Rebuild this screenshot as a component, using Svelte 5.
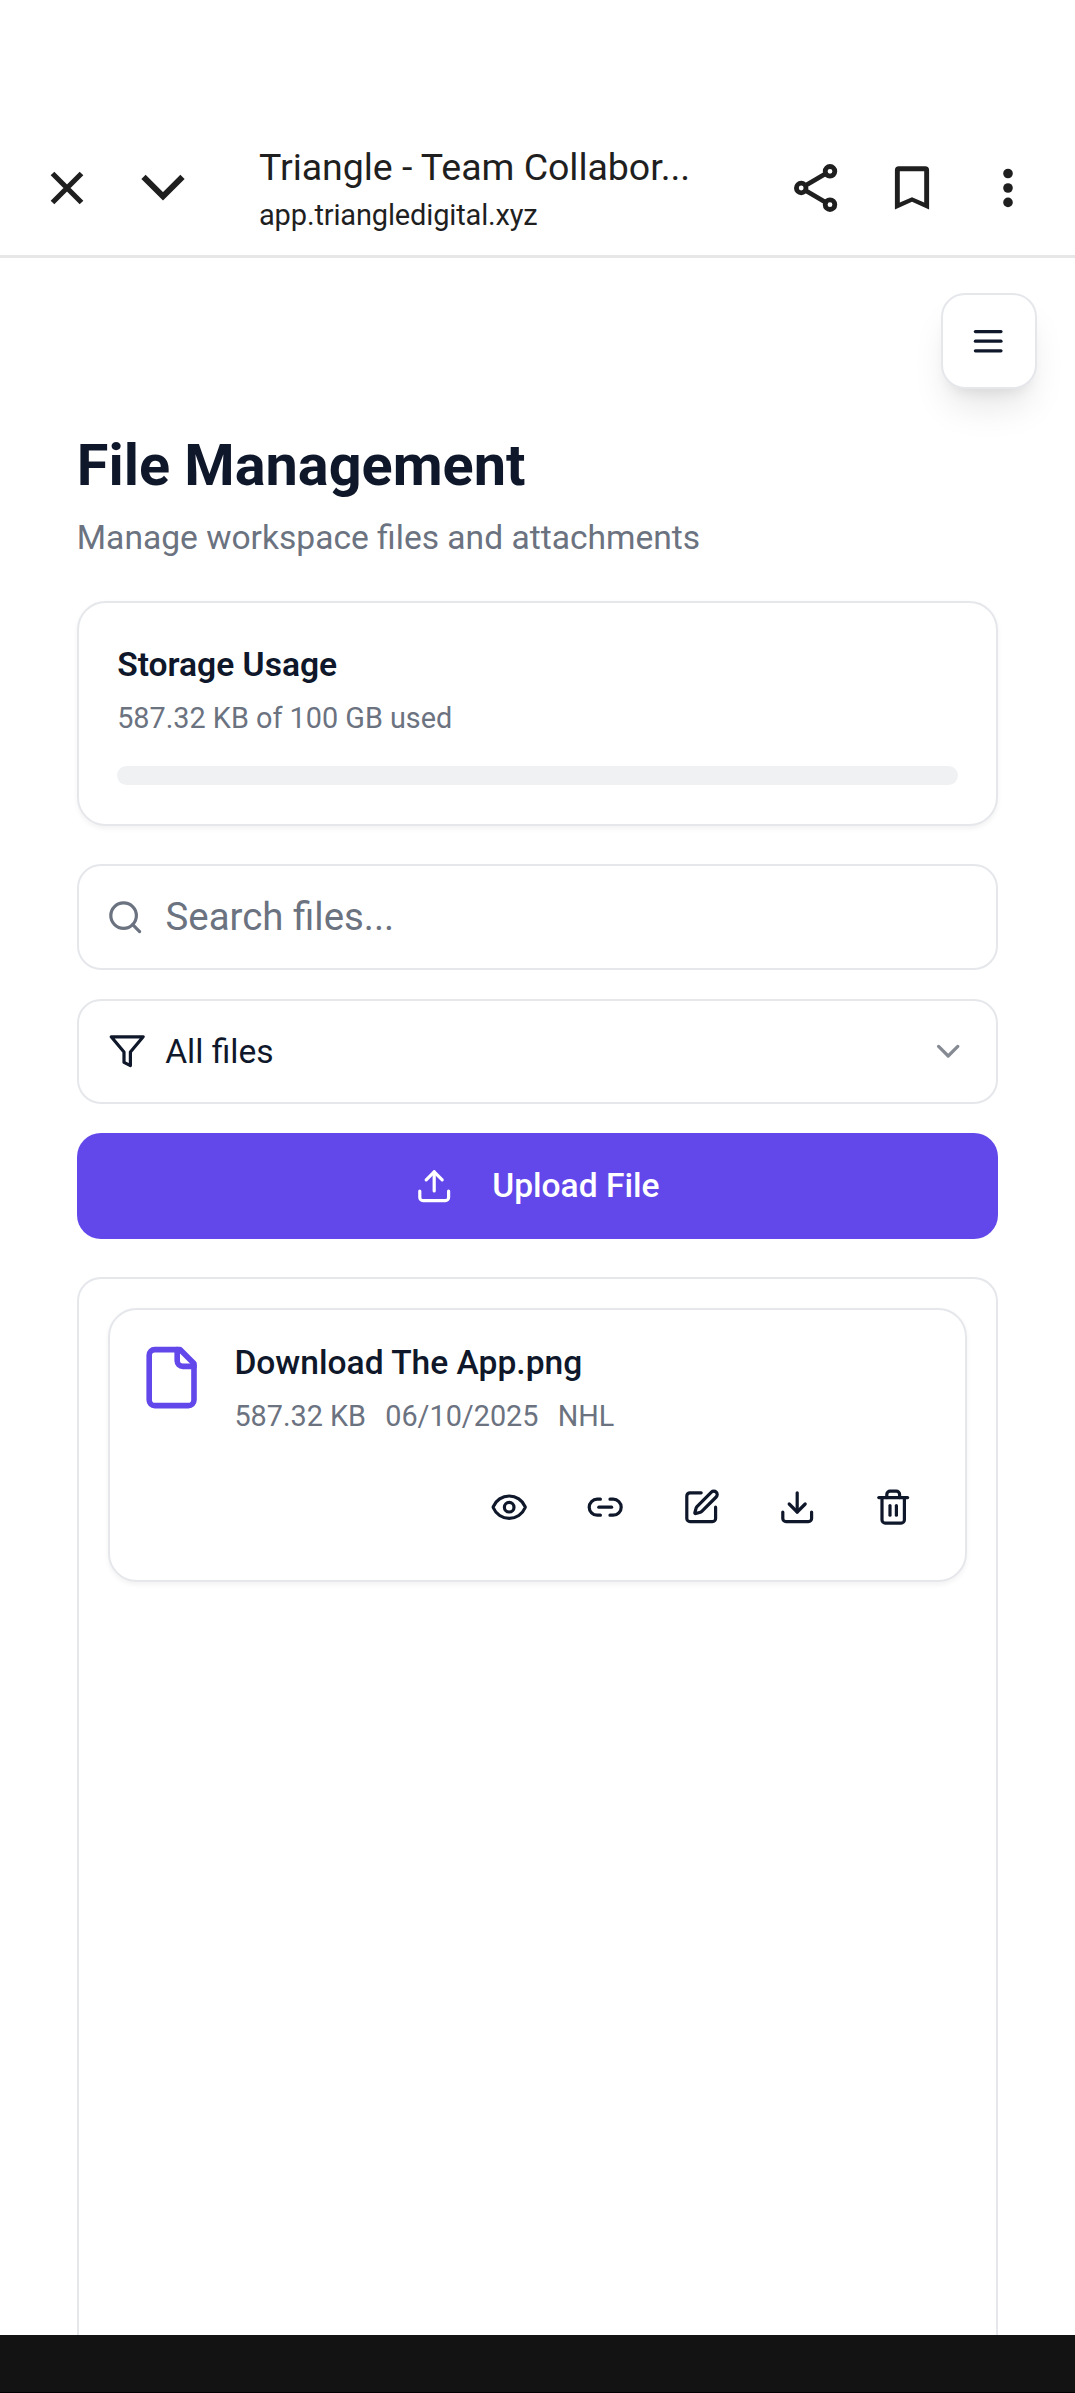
<script lang="ts">
	interface FileItem {
		name: string;
		size: string;
		date: string;
		owner: string;
	}

	const icons: Record<string, string[]> = {
		menu: ['M4 6h16', 'M4 12h16', 'M4 18h16'],
		search: ['M19 11a8 8 0 1 1-16 0 8 8 0 0 1 16 0z', 'm21 21-4.3-4.3'],
		filter: ['M22 3H2l8 9.46V19l4 2v-8.54z'],
		chevron: ['m6 9 6 6 6-6'],
		upload: ['M21 15v4a2 2 0 0 1-2 2H5a2 2 0 0 1-2-2v-4', 'm17 8-5-5-5 5', 'M12 3v12'],
		file: [
			'M15 2H6a2 2 0 0 0-2 2v16a2 2 0 0 0 2 2h12a2 2 0 0 0 2-2V7Z',
			'M14 2v4a2 2 0 0 0 2 2h4'
		],
		eye: [
			'M2.062 12.348a1 1 0 0 1 0-.696 10.75 10.75 0 0 1 19.876 0 1 1 0 0 1 0 .696 10.75 10.75 0 0 1-19.876 0',
			'M15 12a3 3 0 1 1-6 0 3 3 0 0 1 6 0z'
		],
		link: ['M9 17H7A5 5 0 0 1 7 7h2', 'M15 7h2a5 5 0 1 1 0 10h-2', 'M8 12h8'],
		edit: [
			'M12 3H5a2 2 0 0 0-2 2v14a2 2 0 0 0 2 2h14a2 2 0 0 0 2-2v-7',
			'M18.375 2.625a1 1 0 0 1 3 3l-9.013 9.014a2 2 0 0 1-.853.505l-2.873.84a.5.5 0 0 1-.62-.62l.84-2.873a2 2 0 0 1 .506-.852z'
		],
		download: ['M21 15v4a2 2 0 0 1-2 2H5a2 2 0 0 1-2-2v-4', 'm7 10 5 5 5-5', 'M12 15V3'],
		trash: [
			'M3 6h18',
			'M19 6v14c0 1-1 2-2 2H7c-1 0-2-1-2-2V6',
			'M8 6V4c0-1 1-2 2-2h4c1 0 2 1 2 2v2',
			'M10 11v6',
			'M14 11v6'
		]
	};

	const actions = [
		{ icon: 'eye', label: 'Preview' },
		{ icon: 'link', label: 'Copy link' },
		{ icon: 'edit', label: 'Rename' },
		{ icon: 'download', label: 'Download' },
		{ icon: 'trash', label: 'Delete' }
	];

	const files: FileItem[] = [
		{ name: 'Download The App.png', size: '587.32 KB', date: '06/10/2025', owner: 'NHL' }
	];

	let query = $state('');
</script>

{#snippet icon(name: string)}
	<svg class="icon {name}" viewBox="0 0 24 24" aria-hidden="true">
		{#each icons[name] as d}
			<path {d} />
		{/each}
	</svg>
{/snippet}

<div class="screen">
	<header class="browser-bar">
		<button class="bar-btn" aria-label="Close">
			<svg viewBox="0 0 48 48" class="line close"><path d="M9.5 9.5l29 29M38.5 9.5l-29 29" /></svg>
		</button>
		<button class="bar-btn" aria-label="Minimize">
			<svg viewBox="0 0 48 48" class="line down"><path d="M4.5 12.8 24 32.3l19.5-19.5" /></svg>
		</button>
		<div class="page-info">
			<div class="page-title">Triangle - Team Collabor...</div>
			<div class="page-url">app.triangledigital.xyz</div>
		</div>
		<button class="bar-btn" aria-label="Share">
			<svg viewBox="0 0 48 48" class="line share">
				<path d="M13.5 21.5 33.5 9.8M13.5 26.5l20 11.7" />
				<circle cx="9.2" cy="24" r="4.8" />
				<circle cx="38" cy="7.3" r="4.8" />
				<circle cx="38" cy="40.7" r="4.8" />
			</svg>
		</button>
		<button class="bar-btn" aria-label="Bookmark">
			<svg viewBox="0 0 48 48" class="solid">
				<path
					fill-rule="evenodd"
					d="M6.9 45.5V6.3a4 4 0 0 1 4-4h26.2a4 4 0 0 1 4 4v39.2L24 37.8zM11.8 38.4 24 33.2l12.2 5.2V7.2H11.8z"
				/>
			</svg>
		</button>
		<button class="bar-btn" aria-label="More">
			<svg viewBox="0 0 48 48" class="solid">
				<circle cx="24" cy="9.5" r="4.8" />
				<circle cx="24" cy="24" r="4.8" />
				<circle cx="24" cy="38.4" r="4.8" />
			</svg>
		</button>
	</header>

	<main>
		<button class="menu-btn" aria-label="Open menu">{@render icon('menu')}</button>

		<h1>File Management</h1>
		<p class="subtitle">Manage workspace files and attachments</p>

		<section class="card storage">
			<h2>Storage Usage</h2>
			<p class="small">587.32 KB of 100 GB used</p>
			<div class="progress"></div>
		</section>

		<div class="controls">
			<label class="field search-field">
				{@render icon('search')}
				<input type="text" placeholder="Search files..." bind:value={query} />
			</label>
			<button class="field select">
				{@render icon('filter')}
				<span>All files</span>
				{@render icon('chevron')}
			</button>
			<button class="upload-btn">
				{@render icon('upload')}
				<span>Upload File</span>
			</button>
		</div>

		<section class="list">
			{#each files as file}
				<article class="card file-card">
					<div class="file-row">
						{@render icon('file')}
						<div>
							<h3>{file.name}</h3>
							<div class="small meta">
								<span>{file.size}</span>
								<span>{file.date}</span>
								<span>{file.owner}</span>
							</div>
						</div>
					</div>
					<div class="actions">
						{#each actions as action}
							<button aria-label={action.label}>{@render icon(action.icon)}</button>
						{/each}
					</div>
				</article>
			{/each}
		</section>
	</main>

	<div class="nav-bar"></div>
</div>

<style>
	:global(body) {
		margin: 0;
		background: #fff;
	}

	.screen {
		display: flex;
		flex-direction: column;
		height: 2393px;
		overflow: hidden;
		font-family: Roboto, sans-serif;
		color: #0f172a;
		background: #fff;
	}

	.screen :global(*) {
		box-sizing: border-box;
	}

	button {
		display: flex;
		align-items: center;
		justify-content: center;
		padding: 0;
		border: 0;
		background: none;
		font: inherit;
		color: inherit;
	}

	h1,
	h2,
	h3,
	p {
		margin: 0;
	}

	/* Browser toolbar */
	.browser-bar {
		display: flex;
		align-items: center;
		flex-shrink: 0;
		height: 258px;
		padding: 121px 19px 0;
		border-bottom: 3px solid #e7e7e7;
		color: #1f1f1f;
	}

	.bar-btn {
		width: 96px;
		height: 96px;
		flex-shrink: 0;
	}

	.bar-btn svg {
		width: 48px;
		height: 48px;
	}

	.line {
		fill: none;
		stroke: currentColor;
	}

	.close {
		stroke-width: 5.2;
	}

	.down {
		stroke-width: 6;
	}

	.share {
		stroke-width: 4.8;
	}

	.solid {
		fill: currentColor;
	}

	.page-info {
		flex: 1;
		padding: 4px 0 0 48px;
		white-space: nowrap;
	}

	.page-title {
		font-size: 37.5px;
		line-height: 49px;
		letter-spacing: -0.04px;
	}

	.page-url {
		font-size: 29px;
		line-height: 46px;
		letter-spacing: -0.15px;
	}

	/* App */
	main {
		display: flex;
		flex-direction: column;
		flex: 1;
		min-height: 0;
		padding: 35px 76.8px 0;
	}

	.icon {
		width: 38.4px;
		height: 38.4px;
		flex-shrink: 0;
		fill: none;
		stroke: currentColor;
		stroke-width: 2;
		stroke-linecap: round;
		stroke-linejoin: round;
	}

	.menu-btn {
		align-self: flex-end;
		flex-shrink: 0;
		width: 96px;
		height: 96px;
		margin-right: -38.4px;
		border: 2px solid #e5e7eb;
		border-radius: 24px;
		background: #fff;
		box-shadow:
			0 24px 36px -7.2px rgba(0, 0, 0, 0.1),
			0 9.6px 14.4px -9.6px rgba(0, 0, 0, 0.1);
	}

	h1 {
		margin-top: 39.4px;
		font-size: 57.6px;
		line-height: 76.8px;
		font-weight: 700;
	}

	.subtitle {
		margin-top: 8.4px;
		font-size: 33.6px;
		line-height: 48px;
		color: #6b7280;
	}

	.card {
		border: 2px solid #e5e7eb;
		border-radius: 28.8px;
		background: #fff;
		box-shadow: 0 2.4px 4.8px rgba(0, 0, 0, 0.05);
	}

	.storage {
		margin-top: 39.4px;
		padding: 38.4px;
	}

	h2 {
		font-size: 33.6px;
		line-height: 48px;
		font-weight: 600;
	}

	.small {
		margin-top: 9.6px;
		font-size: 28.8px;
		line-height: 38.4px;
		color: #6b7280;
	}

	.progress {
		height: 19.2px;
		margin-top: 28.8px;
		border-radius: 9.6px;
		background: #f0f1f3;
	}

	.controls {
		display: flex;
		flex-direction: column;
		gap: 28.8px;
		margin-top: 38.4px;
	}

	.field {
		display: flex;
		align-items: center;
		height: 105.6px;
		border: 2px solid #e5e7eb;
		border-radius: 24px;
		background: #fff;
	}

	.search-field {
		gap: 21.6px;
		padding: 0 28.8px 0 26.8px;
		color: #6b7280;
	}

	.search-field input {
		flex: 1;
		min-width: 0;
		padding: 0;
		border: 0;
		outline: 0;
		background: none;
		font: inherit;
		font-size: 38.4px;
		color: #0f172a;
	}

	.search-field input::placeholder {
		color: #6b7280;
	}

	.select {
		gap: 19.2px;
		padding: 0 28.8px;
		font-size: 33.6px;
		text-align: left;
	}

	.select span {
		flex: 1;
	}

	.chevron {
		opacity: 0.5;
	}

	.upload-btn {
		gap: 38.4px;
		height: 105.6px;
		border-radius: 24px;
		font-size: 33.6px;
		font-weight: 500;
		color: #fff;
		background: #6248ea;
	}

	.list {
		flex: 1;
		min-height: 0;
		margin-top: 38.8px;
		padding: 28.8px;
		border: 2px solid #e5e7eb;
		border-bottom: 0;
		border-radius: 24px 24px 0 0;
	}

	.file-card {
		padding: 28.8px;
	}

	.file-row {
		display: flex;
		gap: 28.8px;
	}

	.icon.file {
		width: 67.2px;
		height: 67.2px;
		margin-top: 4.8px;
		color: #6248ea;
	}

	h3 {
		font-size: 33.6px;
		line-height: 48px;
		font-weight: 500;
	}

	.meta {
		display: flex;
		gap: 19.2px;
		margin-top: 10px;
	}

	.actions {
		display: flex;
		justify-content: flex-end;
		gap: 9.6px;
		margin-top: 29.2px;
	}

	.actions button {
		width: 86.4px;
		height: 86.4px;
	}

	/* System navigation area */
	.nav-bar {
		flex-shrink: 0;
		height: 58px;
		border-bottom: 1px solid #000;
		background: #131313;
	}
</style>
